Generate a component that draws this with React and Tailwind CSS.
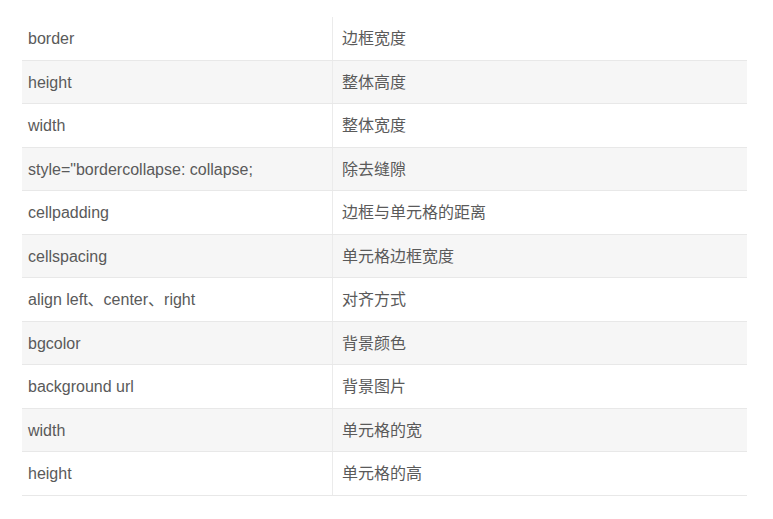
import React from 'react';

const rows = [
  ['border', '边框宽度'],
  ['height', '整体高度'],
  ['width', '整体宽度'],
  ['style="bordercollapse: collapse;', '除去缝隙'],
  ['cellpadding', '边框与单元格的距离'],
  ['cellspacing', '单元格边框宽度'],
  ['align left、center、right', '对齐方式'],
  ['bgcolor', '背景颜色'],
  ['background url', '背景图片'],
  ['width', '单元格的宽'],
  ['height', '单元格的高'],
];

const App = () => {
  return (
    <div className="w-[773px] h-[519px] bg-white pt-[17px] pl-[22px]">
      <div
        className="w-[725px] text-[16px] text-[#5a5a5a]"
        style={{ fontFamily: '"Liberation Sans", "Noto Sans CJK SC", sans-serif' }}
      >
        {rows.map(([attr, desc], i) => (
          <div
            key={i}
            className={`flex h-[43.5px] border-b border-[#e8e8e8] ${i % 2 === 1 ? 'bg-[#f6f6f6]' : 'bg-white'}`}
          >
            <div className="w-[311px] flex items-center pl-[6px] pt-[2px] border-r border-[#ebebeb]">
              {attr}
            </div>
            <div className="flex-1 flex items-center pl-[9px] pt-[2px]">{desc}</div>
          </div>
        ))}
      </div>
    </div>
  );
};

export default App;
